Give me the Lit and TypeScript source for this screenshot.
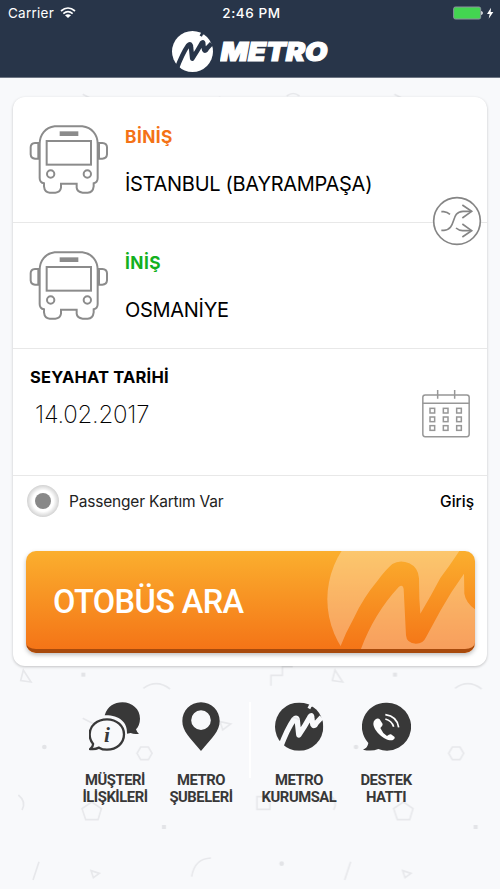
import { LitElement, html, svg, css } from "lit";
import { customElement } from "lit/decorators.js";

const metroMark = (id: string) => svg`
  <mask id=${id}>
    <circle cx="72" cy="72" r="72" fill="#fff"></circle>
    <path d="M15 136 C27 104 44 68 56 51 Q67 39 67 60 L71 97 Q88 72 104 43 Q111 34 110 50 L113 66 Q117 73 123 61 L139 44"
      fill="none" stroke="#000" stroke-width="16" stroke-linejoin="round"></path>
    <path d="M101 18 L105 10 L116 4" fill="none" stroke="#000" stroke-width="9"></path>
    <path d="M0 118 L9 112 L25 126 L12 146 Z" fill="#000"></path>
  </mask>
  <rect width="144" height="144" fill="currentColor" mask="url(#${id})"></rect>`;

@customElement("bus-icon")
export class BusIcon extends LitElement {
  static styles = css`
    :host { display: block; width: 80px; height: 70px; }
    svg { display: block; }
  `;
  render() {
    return html`<svg width="80" height="70" viewBox="0 0 240 210" fill="none" stroke="#8b8b8b" stroke-width="6">
      <path d="M77 4 H160 C189 8 206 28 206 57 V159 Q206 173 194 175 V184 Q192 202 176 203 H161 Q144 201 143 188 V176 H96 V188 Q94 202 79 203 H62 Q47 202 45 184 V175 Q32 173 32 159 V57 C32 28 49 8 77 4 Z"></path>
      <path d="M32 54 H18 Q5 55 5 67 V88 Q6 100 18 101 H32"></path>
      <path d="M206 54 H220 Q234 55 234 67 V88 Q233 100 220 101 H206"></path>
      <path d="M29 54 V101 M209 54 V101" stroke-width="8"></path>
      <rect x="53" y="48" width="133" height="71"></rect>
      <path d="M92 26 H148" stroke-width="14"></path>
      <circle cx="65" cy="147" r="11"></circle>
      <circle cx="175" cy="147" r="11"></circle>
    </svg>`;
  }
}

@customElement("app-root")
export class AppRoot extends LitElement {
  static styles = css`
    :host {
      display: block;
      position: relative;
      width: 500px;
      height: 889px;
      overflow: hidden;
      background: #f8f9fb;
      color: #000;
      font-family: Inter, "Liberation Sans", sans-serif;
    }
    * { box-sizing: border-box; }
    svg { display: block; }
    .pattern { position: absolute; left: 0; top: 0; }
    header {
      position: relative;
      height: 78px;
      background: #283549;
      border-bottom: 1px solid #6d7583;
      color: #fff;
    }
    .status {
      display: grid;
      grid-template-columns: 1fr auto 1fr;
      align-items: center;
      height: 26px;
      padding: 0 6px 0 8px;
      font-size: 13.5px;
    }
    .left { display: flex; align-items: center; gap: 6px; }
    .carrier { letter-spacing: 0.25px; }
    .time { font-weight: 500; letter-spacing: 0.6px; padding-left: 1px; }
    .right { display: flex; justify-content: flex-end; }
    .brand { display: flex; padding: 5px 0 0 172px; gap: 7px; }
    .card {
      position: relative;
      width: 474px;
      height: 569px;
      margin: 19px 0 0 13px;
      background: #fff;
      border-radius: 12px;
      box-shadow: 0 1px 3px rgba(0, 0, 0, 0.22);
    }
    .stop {
      display: flex;
      height: 126px;
      padding: 28px 0 0 16px;
      gap: 16px;
      border-bottom: 1.5px solid #e8e8e8;
    }
    .kind { height: 24px; line-height: 24px; font-size: 17.3px; font-weight: 700; letter-spacing: 0.45px; }
    .from .kind { color: #f47216; }
    .to .kind { color: #13b020; }
    .city { margin-top: 22px; line-height: 26px; font-size: 20px; letter-spacing: -0.29px; white-space: nowrap; }
    .swap { position: absolute; right: 5px; top: 99px; }
    .date {
      display: flex;
      justify-content: space-between;
      height: 127px;
      padding: 16px 17px 0 17px;
      border-bottom: 1.5px solid #e8e8e8;
    }
    .caption { line-height: 24px; font-size: 16.5px; font-weight: 700; letter-spacing: 0.17px; white-space: nowrap; }
    .day { margin: 10px 0 0 5px; line-height: 32px; font-size: 24px; font-weight: 200; letter-spacing: -0.25px; }
    .calendar { margin-top: 25px; }
    .member {
      display: flex;
      align-items: center;
      height: 50px;
      padding: 0 13px 0 14px;
      font-size: 15.5px;
    }
    .radio {
      display: flex;
      align-items: center;
      justify-content: center;
      width: 32px;
      height: 32px;
      margin-right: 10px;
      border-radius: 50%;
      background: radial-gradient(circle closest-side, #fff 65%, #d2d2d2 100%);
    }
    .dot { width: 16px; height: 16px; border-radius: 50%; background: #888; }
    .member .text { flex: 1; color: #222; letter-spacing: -0.19px; }
    .login { font-weight: 500; }
    .search {
      position: relative;
      display: flex;
      align-items: center;
      justify-content: space-between;
      width: 449px;
      height: 102px;
      margin: 25px 0 0 13px;
      padding: 0 0 0 27px;
      border: 0;
      border-radius: 10px;
      overflow: hidden;
      background: linear-gradient(#fbaf2e, #f47216);
      color: #fff;
      font-family: Roboto, sans-serif;
      font-size: 32.5px;
      font-weight: 500;
      letter-spacing: -0.6px;
    }
    .lip { position: absolute; inset: 0; border-radius: 10px; border-bottom: 4px solid #a84a0c; }
    .buttonshadow { filter: drop-shadow(0 2px 2px rgba(0, 0, 0, 0.25)); }
    nav {
      position: relative;
      display: grid;
      grid-template-columns: 86px 86px 12px 86px 88px;
      margin: 36px 0 0 72px;
      color: #383838;
      font-family: Roboto, sans-serif;
      font-size: 14.8px;
      line-height: 17.4px;
      font-weight: 700;
      letter-spacing: -0.45px;
      text-align: center;
      white-space: nowrap;
    }
    .item { display: flex; flex-direction: column; align-items: center; gap: 20px; }
    .rule { width: 1.5px; height: 76px; margin-left: 5px; background: #fff; }
  `;

  private pattern() {
    return html`<svg class="pattern" width="500" height="889" viewBox="0 0 1500 2667">
      <defs>
        <pattern id="shapes" width="935" height="936" x="0" y="1980" patternUnits="userSpaceOnUse">
          <g fill="none" stroke="#e7e8eb" stroke-width="5">
            <path d="M70 30 L62 62 L93 66 Z"></path>
            <path d="M430 85 Q470 56 510 87"></path>
            <path d="M248 175 L282 192"></path>
            <path d="M660 185 L692 192 L668 210 Z"></path>
            <path d="M422 261 H445 L456 280 L445 299 H422 L411 280 Z"></path>
            <path d="M55 405 Q80 425 66 450"></path>
            <path d="M275 426 L304 446 L294 479 H257 L246 446 Z"></path>
            <path d="M117 605 L99 660"></path>
            <path d="M273 632 L298 640 L280 653 Z"></path>
            <path d="M575 650 Q583 596 633 594"></path>
            <path d="M813 77 V46 H847 V20 H878"></path>
            <path d="M771 410 H810 V448 H771 Z"></path>
            <path d="M860 180 Q880 165 898 180"></path>
          </g>
          <g fill="#e3e4e7">
            <rect x="244" y="38" width="12" height="12"></rect>
            <rect x="486" y="495" width="12" height="12"></rect>
            <circle cx="133" cy="261" r="7"></circle>
            <circle cx="845" cy="611" r="7"></circle>
          </g>
        </pattern>
      </defs>
      <rect y="234" width="1500" height="80" fill="url(#shapes)"></rect>
      <rect y="1990" width="1500" height="677" fill="url(#shapes)"></rect>
    </svg>`;
  }

  render() {
    return html`
      ${this.pattern()}
      <header>
        <div class="status">
          <div class="left">
            <span class="carrier">Carrier</span>
            <svg width="16" height="12" viewBox="0 0 48 36" fill="none" stroke="#fff" stroke-width="5">
              <path d="M3 12 Q24 -6 45 12"></path>
              <path d="M10 20 Q24 8 38 20"></path>
              <path d="M24 33 L15 25 Q24 18 33 25 Z" fill="#fff" stroke="none"></path>
            </svg>
          </div>
          <span class="time">2:46 PM</span>
          <div class="right">
            <svg width="41" height="14" viewBox="0 0 123 42">
              <rect x="2" y="3" width="81" height="36" rx="5" fill="#43d551" stroke="#8d93a0" stroke-width="3"></rect>
              <path d="M86 16 Q91 21 86 26 Z" fill="#fff" stroke="#fff" stroke-width="2"></path>
              <path d="M114 5 L102 24 H110 L107 38 L121 18 H113 Z" fill="#fff"></path>
            </svg>
          </div>
        </div>
        <div class="brand">
          <svg width="41" height="41" viewBox="0 0 144 144">${metroMark("logo-cut")}</svg>
          <svg width="112" height="41" viewBox="0 0 112 41">
            <text x="0.5" y="29.7" fill="#fff" stroke="#fff" stroke-width="1.2" font-family="Inter, sans-serif" font-size="25.5"
              font-weight="900" font-style="italic" textLength="107" lengthAdjust="spacingAndGlyphs">METRO</text>
          </svg>
        </div>
      </header>

      <main class="card">
        <section class="stop from">
          <bus-icon></bus-icon>
          <div>
            <div class="kind">BİNİŞ</div>
            <div class="city">İSTANBUL (BAYRAMPAŞA)</div>
          </div>
        </section>
        <section class="stop to">
          <bus-icon></bus-icon>
          <div>
            <div class="kind">İNİŞ</div>
            <div class="city">OSMANİYE</div>
          </div>
        </section>
        <svg class="swap" width="50" height="50" viewBox="0 0 150 150" fill="none" stroke="#858585" stroke-width="5">
          <circle cx="75" cy="75" r="70" fill="#fff" stroke-width="5"></circle>
          <path d="M28 47 H35 Q46 48 54 55"></path>
          <path d="M28 103 H36 C75 100 54 47 93 46 H118"></path>
          <path d="M72 96 Q81 104 92 104 H118"></path>
          <path d="M91 27 L119 46 L91 66 M91 84 L119 104 L91 123"></path>
        </svg>
        <section class="date">
          <div>
            <div class="caption">SEYAHAT TARİHİ</div>
            <div class="day">14.02.2017</div>
          </div>
          <svg class="calendar" width="48" height="48" viewBox="0 0 144 144" fill="none" stroke="#979797" stroke-width="4.5">
            <rect x="2.5" y="15" width="139" height="125" rx="7"></rect>
            <path d="M2 40 H142 M47 0 V26 M98 0 V26"></path>
            ${[24, 64, 104].map((x) => [55, 81, 107].map((y) => svg`<rect x=${x} y=${y} width="14" height="14"></rect>`))}
          </svg>
        </section>
        <section class="member">
          <span class="radio"><span class="dot"></span></span>
          <span class="text">Passenger Kartım Var</span>
          <span class="login">Giriş</span>
        </section>
        <div class="buttonshadow">
          <button class="search">
            <span>OTOBÜS ARA</span>
            <svg width="148" height="102" viewBox="231 62 444 306">
              <mask id="button-cut">
                <circle cx="500" cy="207" r="268" fill="#fff"></circle>
                <path fill="#000" d="M269 354 Q286 308 312 262 Q340 202 382 152 Q405 120 427 101 Q450 87 478 99 Q505 112 507 144 L508 205 L511 250 L543 195 L571 143 L600 103 L628 62 H680 V240 Q648 220 643 190 L642 130 Q602 185 572 240 L528 321 Q520 340 498 340 Q470 340 468 315 L461 177 Q459 160 446 170 Q372 250 332 358 V368 H262 Z"></path>
              </mask>
              <rect x="231" y="62" width="444" height="306" fill="#fff" fill-opacity="0.3" mask="url(#button-cut)"></rect>
            </svg>
            <span class="lip"></span>
          </button>
        </div>
      </main>

      <nav>
        <div class="item">
          <svg width="52" height="50" viewBox="0 0 156 150">
            <path d="M47 40 C56 12 76 1 100 1 C130 1 153 22 153 50 C153 64 148 75 141 82 Q143 90 150 95 Q136 98 125 93 L114 95 C116 60 90 39 47 40 Z" fill="#383838"></path>
            <path d="M54 52 C83 52 105 72 105 97 C105 124 83 143 54 143 Q40 143 30 137 Q18 143 4 141 Q13 134 12 125 Q2 114 2 97 C2 72 24 52 54 52 Z" fill="#f8f9fb" stroke="#383838" stroke-width="7"></path>
            <text x="54" y="119" font-family="Liberation Serif, serif" font-size="64" font-weight="700" font-style="italic" text-anchor="middle" fill="#383838">i</text>
          </svg>
          <span>MÜŞTERİ<br />İLİŞKİLERİ</span>
        </div>
        <div class="item">
          <svg width="38" height="50" viewBox="0 0 114 150">
            <path fill="#383838" fill-rule="evenodd" d="M57 1 C89 1 113 26 113 57 C113 88 91 106 57 147 C23 106 1 88 1 57 C1 26 25 1 57 1 Z M57 25 A29 29 0 1 0 57 84 A29 29 0 1 0 57 25 Z"></path>
          </svg>
          <span>METRO<br />ŞUBELERİ</span>
        </div>
        <span class="rule"></span>
        <div class="item">
          <svg width="49" height="50" viewBox="0 -1 146 148">${metroMark("nav-cut")}</svg>
          <span>METRO<br />KURUMSAL</span>
        </div>
        <div class="item">
          <svg width="49" height="50" viewBox="-1 -1 147 150">
            <path d="M72 1 A72 72 0 1 1 48 140 Q28 148 2 142 Q16 137 18 122 A72 72 0 0 1 72 1 Z" fill="#383838"></path>
            <path d="M38 52 Q47 46 52 51 L61 65 Q62 70 54 77 Q60 92 74 101 Q82 94 86 96 L97 104 Q99 108 92 113 C73 120 34 88 33 64 Q33 56 38 52 Z" fill="#fff"></path>
            <g fill="none" stroke="#fff" stroke-width="5">
              <path d="M69 50 Q88 55 94 73"></path>
              <path d="M69 37 Q104 42 109 75"></path>
            </g>
          </svg>
          <span>DESTEK<br />HATTI</span>
        </div>
      </nav>
    `;
  }
}
